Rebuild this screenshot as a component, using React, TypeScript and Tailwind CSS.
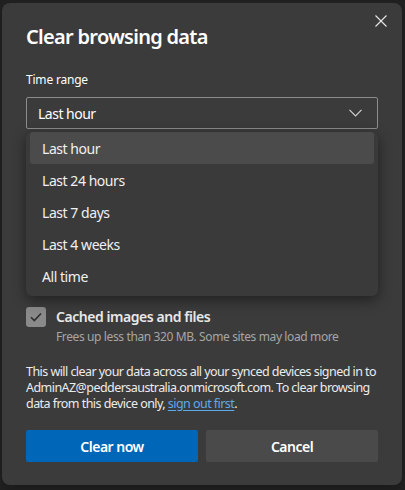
import React from "react";

const options = ["Last hour", "Last 24 hours", "Last 7 days", "Last 4 weeks", "All time"];

export default function App() {
  return (
    <div
      className="h-[490px] w-[405px] bg-[#202020] pl-[2px] pt-[3px]"
      style={{ fontFamily: '"Noto Sans", "Open Sans", sans-serif' }}
    >
      <div className="relative h-[482px] w-[400px] rounded-lg bg-[#3b3b3b] px-6 pt-[20px] text-white shadow-lg">
        <button className="absolute right-[14px] top-[11px] p-[1px] text-[#e8e8e8]">
          <svg width="12" height="12" viewBox="0 0 12 12" fill="none" stroke="currentColor" strokeWidth="1.1">
            <path d="M0.5 0.5 L11.5 11.5 M11.5 0.5 L0.5 11.5" />
          </svg>
        </button>

        <h1 className="h-[28px] text-[20px] font-semibold leading-[28px] tracking-[-0.7px]">Clear browsing data</h1>

        <div className="mt-[20px] text-[12px] leading-[18px] tracking-[-0.2px]">Time range</div>

        <div className="relative mt-[8px]">
          <div className="flex h-[32px] w-[352px] items-center justify-between rounded-[2px] border border-[#8c8c8c] pl-[11px] pr-[15px] text-[14px] tracking-[-0.5px]">
            <span>Last hour</span>
            <svg width="13" height="8" viewBox="0 0 13 8" fill="none" stroke="#d0d0d0" strokeWidth="1.2">
              <path d="M0.5 0.8 L6.5 6.8 L12.5 0.8" />
            </svg>
          </div>

          <div className="absolute left-0 top-[35px] z-10 w-[352px] rounded-md bg-[#3a3a3a] px-[4px] pb-[4px] shadow-[0_4px_14px_rgba(0,0,0,0.45)]">
            {options.map((o, i) => (
              <div
                key={o}
                className={
                  "flex h-[32px] items-center rounded-[3px] pl-[12px] text-[14px] tracking-[-0.45px] text-[#f0f0f0] " +
                  (i === 0 ? "bg-[#4b4b4b]" : "")
                }
              >
                {o}
              </div>
            ))}
          </div>
        </div>

        {/* hidden rows under the dropdown */}
        <div className="h-[178px]" />

        <div className="flex gap-[10px]">
          <div className="flex h-[20px] w-[20px] shrink-0 items-center justify-center rounded-[3px] bg-[#8a8a8a]">
            <svg width="12" height="10" viewBox="0 0 12 10" fill="none" stroke="#2e2e2e" strokeWidth="1.6">
              <path d="M1 5.2 L4.3 8.5 L11 1.5" />
            </svg>
          </div>
          <div>
            <div className="text-[14px] font-semibold leading-[20px] tracking-[-0.45px] text-[#e8e8e8]">
              Cached images and files
            </div>
            <div className="mt-[2px] text-[12px] leading-[16px] tracking-[-0.38px] text-[#a6a6a6]">
              Frees up less than 320 MB. Some sites may load more
            </div>
          </div>
        </div>

        <p className="mt-[19px] whitespace-nowrap text-[12.5px] leading-[16px] tracking-[-0.55px] text-[#ececec]">
          This will clear your data across all your synced devices signed in to
          <br />
          AdminAZ@peddersaustralia.onmicrosoft.com. To clear browsing
          <br />
          data from this device only,{" "}
          <a className="text-[#60a9e8] underline underline-offset-2">sign out first</a>.
        </p>

        <div className="mt-[18px] flex gap-[8px]">
          <button className="h-[32px] w-[172px] rounded-[2px] bg-[#0067b8] text-[14px] font-semibold tracking-[-0.5px] text-white">
            Clear now
          </button>
          <button className="h-[32px] w-[172px] rounded-[2px] bg-[#4a4a4a] text-[14px] font-semibold tracking-[-0.5px] text-white">
            Cancel
          </button>
        </div>
      </div>
    </div>
  );
}
